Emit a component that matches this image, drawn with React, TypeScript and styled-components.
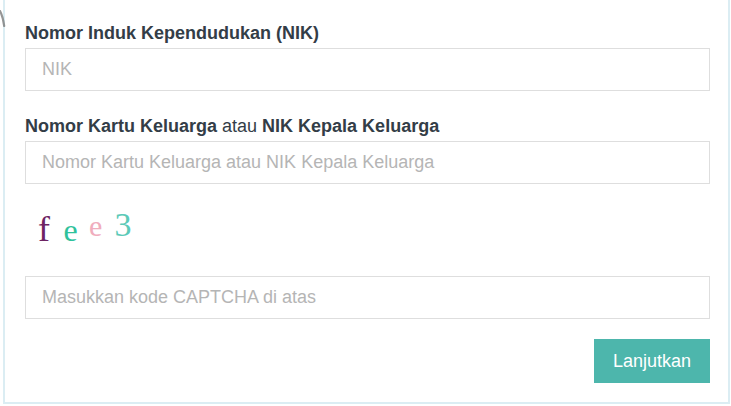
import React from "react";
import styled, { createGlobalStyle } from "styled-components";

const GlobalStyle = createGlobalStyle`
  html, body {
    margin: 0;
    padding: 0;
    background: #ffffff;
    overflow: hidden;
  }
  body {
    font-family: "Liberation Sans", Arial, sans-serif;
  }
  * { box-sizing: border-box; }
`;

const Page = styled.div`
  position: relative;
  width: 731px;
  height: 406px;
  overflow: hidden;
  background: #fff;
`;

const EdgeMark = styled.svg`
  position: absolute;
  left: 0;
  top: 10px;
  width: 8px;
  height: 22px;
`;

const Panel = styled.div`
  margin-left: 3px;
  margin-top: -20px;
  width: 727px;
  border: 2px solid #dbedf3;
  background: #fff;
  padding: 41px 18px 19px 20px;
  display: flex;
  flex-direction: column;
`;

const Group = styled.div<{ $mb?: number }>`
  display: flex;
  flex-direction: column;
  margin-bottom: ${(p) => p.$mb ?? 25}px;
`;

const Label = styled.div`
  font-family: "Liberation Sans", Arial, sans-serif;
  font-size: 18px;
  line-height: 20px;
  font-weight: 700;
  color: #333d47;
  margin-bottom: 5px;
  white-space: nowrap;
`;

const Plain = styled.span`
  font-weight: 400;
`;

const Input = styled.input`
  width: 100%;
  height: 43px;
  border: 1px solid #dedede;
  border-radius: 0;
  padding: 0 16px;
  font-family: "Liberation Sans", Arial, sans-serif;
  font-size: 18px;
  color: #555;
  background: #fff;
  outline: none;
  &::placeholder {
    color: #b5b5b5;
  }
`;

const Captcha = styled.div`
  display: flex;
  align-items: baseline;
  height: 44px;
  margin: 24px 0;
  padding-top: 3px;
  padding-left: 13px;
`;

const Letter = styled.span<{ $size: number; $color: string; $rise?: number }>`
  display: inline-block;
  width: 25.5px;
  font-family: "Liberation Serif", "Times New Roman", serif;
  font-size: ${(p) => p.$size}px;
  line-height: 1;
  color: ${(p) => p.$color};
  transform: translateY(${(p) => -(p.$rise ?? 0)}px);
`;

const Actions = styled.div`
  display: flex;
  justify-content: flex-end;
  margin-top: 20px;
`;

const Button = styled.button`
  height: 44px;
  padding: 0 19px;
  border: none;
  border-radius: 0;
  background: #4db6ac;
  color: #ffffff;
  font-family: "Liberation Sans", Arial, sans-serif;
  font-size: 18px;
  cursor: pointer;
`;

export default function App() {
  return (
    <>
      <GlobalStyle />
      <Page>
        <EdgeMark viewBox="0 0 8 22">
          <path
            d="M0 1 Q2.8 6 4.2 16"
            stroke="#7a7a7a"
            strokeWidth="2.2"
            fill="none"
            strokeLinecap="round"
            opacity="0.8"
          />
        </EdgeMark>
        <Panel>
          <Group>
            <Label>Nomor Induk Kependudukan (NIK)</Label>
            <Input placeholder="NIK" />
          </Group>
          <Group $mb={0}>
            <Label>
              Nomor Kartu Keluarga <Plain>atau</Plain> NIK Kepala Keluarga
            </Label>
            <Input placeholder="Nomor Kartu Keluarga atau NIK Kepala Keluarga" />
          </Group>
          <Captcha>
            <Letter $size={36} $color="#6d2463">f</Letter>
            <Letter $size={32} $color="#2fc29c">e</Letter>
            <Letter $size={30} $color="#f0adbd" $rise={5}>e</Letter>
            <Letter $size={34} $color="#5ccab8" $rise={5}>3</Letter>
          </Captcha>
          <Input placeholder="Masukkan kode CAPTCHA di atas" />
          <Actions>
            <Button>Lanjutkan</Button>
          </Actions>
        </Panel>
      </Page>
    </>
  );
}
